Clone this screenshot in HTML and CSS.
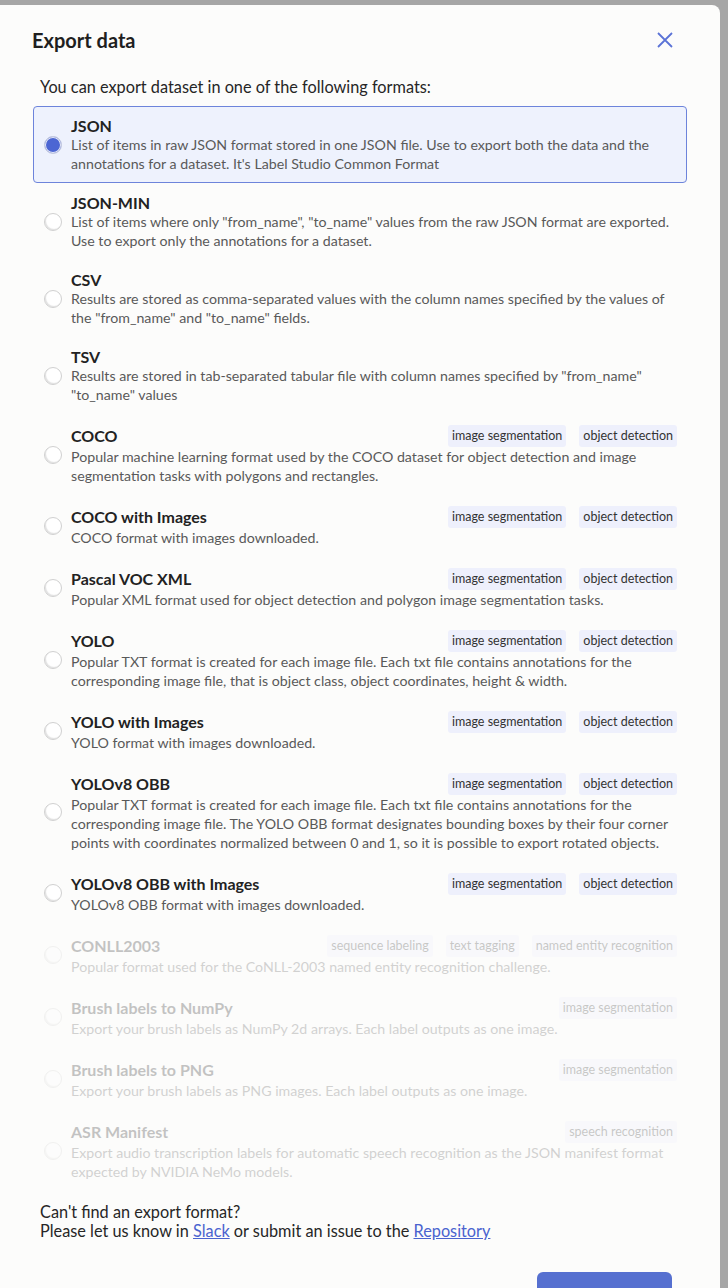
FILE: index.html
```html
<!DOCTYPE html>
<html>
<head>
<meta charset="utf-8">
<link rel="stylesheet" href="styles.css">
</head>
<body>
<div class="modal">
  <div class="header">
    <h1 class="title">Export data</h1>
    <button class="close" aria-label="Close">
      <svg width="16" height="16" viewBox="0 0 16 16"><path d="M1 1L15 15M15 1L1 15" stroke="#5b73d6" stroke-width="1.8" fill="none"/></svg>
    </button>
  </div>
  <p class="intro">You can export dataset in one of the following formats:</p>
  <div class="list">
    <div class="item selected">
      <span class="radio"></span>
      <div class="body">
        <div class="head"><span class="name">JSON</span></div>
        <div class="desc">List of items in raw JSON format stored in one JSON file. Use to export both the data and the annotations for a dataset. It's Label Studio Common Format</div>
      </div>
    </div>
    <div class="item">
      <span class="radio"></span>
      <div class="body">
        <div class="head"><span class="name">JSON-MIN</span></div>
        <div class="desc">List of items where only "from_name", "to_name" values from the raw JSON format are exported. Use to export only the annotations for a dataset.</div>
      </div>
    </div>
    <div class="item">
      <span class="radio"></span>
      <div class="body">
        <div class="head"><span class="name">CSV</span></div>
        <div class="desc">Results are stored as comma-separated values with the column names specified by the values of the "from_name" and "to_name" fields.</div>
      </div>
    </div>
    <div class="item">
      <span class="radio"></span>
      <div class="body">
        <div class="head"><span class="name">TSV</span></div>
        <div class="desc">Results are stored in tab-separated tabular file with column names specified by "from_name" "to_name" values</div>
      </div>
    </div>
    <div class="item">
      <span class="radio"></span>
      <div class="body">
        <div class="head tagged"><span class="name">COCO</span><span class="tags"><span class="tag">image segmentation</span><span class="tag">object detection</span></span></div>
        <div class="desc">Popular machine learning format used by the COCO dataset for object detection and image segmentation tasks with polygons and rectangles.</div>
      </div>
    </div>
    <div class="item">
      <span class="radio"></span>
      <div class="body">
        <div class="head tagged"><span class="name">COCO with Images</span><span class="tags"><span class="tag">image segmentation</span><span class="tag">object detection</span></span></div>
        <div class="desc">COCO format with images downloaded.</div>
      </div>
    </div>
    <div class="item">
      <span class="radio"></span>
      <div class="body">
        <div class="head tagged"><span class="name">Pascal VOC XML</span><span class="tags"><span class="tag">image segmentation</span><span class="tag">object detection</span></span></div>
        <div class="desc">Popular XML format used for object detection and polygon image segmentation tasks.</div>
      </div>
    </div>
    <div class="item">
      <span class="radio"></span>
      <div class="body">
        <div class="head tagged"><span class="name">YOLO</span><span class="tags"><span class="tag">image segmentation</span><span class="tag">object detection</span></span></div>
        <div class="desc">Popular TXT format is created for each image file. Each txt file contains annotations for the corresponding image file, that is object class, object coordinates, height &amp; width.</div>
      </div>
    </div>
    <div class="item">
      <span class="radio"></span>
      <div class="body">
        <div class="head tagged"><span class="name">YOLO with Images</span><span class="tags"><span class="tag">image segmentation</span><span class="tag">object detection</span></span></div>
        <div class="desc">YOLO format with images downloaded.</div>
      </div>
    </div>
    <div class="item">
      <span class="radio"></span>
      <div class="body">
        <div class="head tagged"><span class="name">YOLOv8 OBB</span><span class="tags"><span class="tag">image segmentation</span><span class="tag">object detection</span></span></div>
        <div class="desc">Popular TXT format is created for each image file. Each txt file contains annotations for the corresponding image file. The YOLO OBB format designates bounding boxes by their four corner points with coordinates normalized between 0 and 1, so it is possible to export rotated objects.</div>
      </div>
    </div>
    <div class="item">
      <span class="radio"></span>
      <div class="body">
        <div class="head tagged"><span class="name">YOLOv8 OBB with Images</span><span class="tags"><span class="tag">image segmentation</span><span class="tag">object detection</span></span></div>
        <div class="desc">YOLOv8 OBB format with images downloaded.</div>
      </div>
    </div>
    <div class="item disabled">
      <span class="radio"></span>
      <div class="body">
        <div class="head tagged"><span class="name">CONLL2003</span><span class="tags"><span class="tag">sequence labeling</span><span class="tag">text tagging</span><span class="tag">named entity recognition</span></span></div>
        <div class="desc">Popular format used for the CoNLL-2003 named entity recognition challenge.</div>
      </div>
    </div>
    <div class="item disabled">
      <span class="radio"></span>
      <div class="body">
        <div class="head tagged"><span class="name">Brush labels to NumPy</span><span class="tags"><span class="tag">image segmentation</span></span></div>
        <div class="desc">Export your brush labels as NumPy 2d arrays. Each label outputs as one image.</div>
      </div>
    </div>
    <div class="item disabled">
      <span class="radio"></span>
      <div class="body">
        <div class="head tagged"><span class="name">Brush labels to PNG</span><span class="tags"><span class="tag">image segmentation</span></span></div>
        <div class="desc">Export your brush labels as PNG images. Each label outputs as one image.</div>
      </div>
    </div>
    <div class="item disabled">
      <span class="radio"></span>
      <div class="body">
        <div class="head tagged"><span class="name">ASR Manifest</span><span class="tags"><span class="tag">speech recognition</span></span></div>
        <div class="desc">Export audio transcription labels for automatic speech recognition as the JSON manifest format expected by NVIDIA NeMo models.</div>
      </div>
    </div>
  </div>
  <div class="help">
    Can't find an export format?<br>
    Please let us know in <a href="#">Slack</a> or submit an issue to the <a href="#">Repository</a>
  </div>
  <div class="footer">
    <button class="export">Export</button>
  </div>
</div>
</body>
</html>
```

FILE: styles.css
```css
html, body {
  margin: 0;
  padding: 0;
  height: 100%;
  overflow: hidden;
}
body {
  background: #a6a6a6;
  font-family: Lato, "Liberation Sans", sans-serif;
  color: #262626;
  padding-top: 5px;
  box-sizing: border-box;
}
.modal {
  width: 720px;
  background: #fcfcfb;
  border-radius: 0 8px 0 0;
  padding: 0 33px;
  box-sizing: border-box;
  min-height: 1400px;
}
.header {
  display: flex;
  align-items: center;
  justify-content: space-between;
  padding: 23px 14px 0 0;
  height: 24px;
}
.title {
  margin: 0 0 0 -1px;
  font-size: 20px;
  font-weight: 700;
  line-height: 24px;
  color: #1f1f1f;
}
.close {
  border: none;
  background: none;
  padding: 0;
  width: 16px;
  height: 16px;
  display: flex;
}
.intro {
  margin: 25px 0 9px 7px;
  font-size: 16.3px;
  line-height: 20px;
  color: #262626;
}
.list {
  display: flex;
  flex-direction: column;
}
.item {
  display: flex;
  align-items: center;
  gap: 9px;
  padding: 9px 9px 9px 10px;
  border: 1px solid transparent;
  border-radius: 4px;
}
.item.selected {
  background: #eef2fd;
  border-color: #6d84db;
}
.item.disabled {
  opacity: 0.26;
}
.radio {
  flex: none;
  width: 18px;
  height: 18px;
  border-radius: 50%;
  border: 1px solid #d0d0d0;
  box-sizing: border-box;
  background: #fff;
  box-shadow: inset 1px -1px 1px rgba(0,0,0,0.12);
}
.selected .radio {
  background: #4c66d3;
  border: 1px solid #c8cde0;
  box-shadow: inset 0 0 0 1px #e8ebf7;
}
.body {
  flex: 1;
  min-width: 0;
}
.head {
  display: flex;
  align-items: center;
  justify-content: space-between;
  height: 19px;
}
.head.tagged {
  height: 23px;
}
.name {
  font-size: 16px;
  font-weight: 700;
  color: #222;
  line-height: 19px;
}
.tags {
  display: flex;
  gap: 13px;
}
.tag {
  background: #eef0fc;
  font-size: 12.5px;
  line-height: 22px;
  padding: 0 4px;
  border-radius: 3px;
  color: #333;
}
.desc {
  font-size: 14.2px;
  line-height: 19px;
  color: #595959;
}
.help {
  margin: 11px 0 0 7px;
  font-size: 16.3px;
  line-height: 19px;
  color: #262626;
}
.help a {
  color: #4a63cf;
  text-decoration: underline;
}
.footer {
  display: flex;
  justify-content: flex-end;
  padding: 32px 15px 0 0;
}
.export {
  width: 135px;
  height: 40px;
  border: none;
  border-radius: 6px;
  background: #5670d0;
  color: #fff;
  font-family: Lato, "Liberation Sans", sans-serif;
  font-size: 16px;
  font-weight: 700;
}
```
